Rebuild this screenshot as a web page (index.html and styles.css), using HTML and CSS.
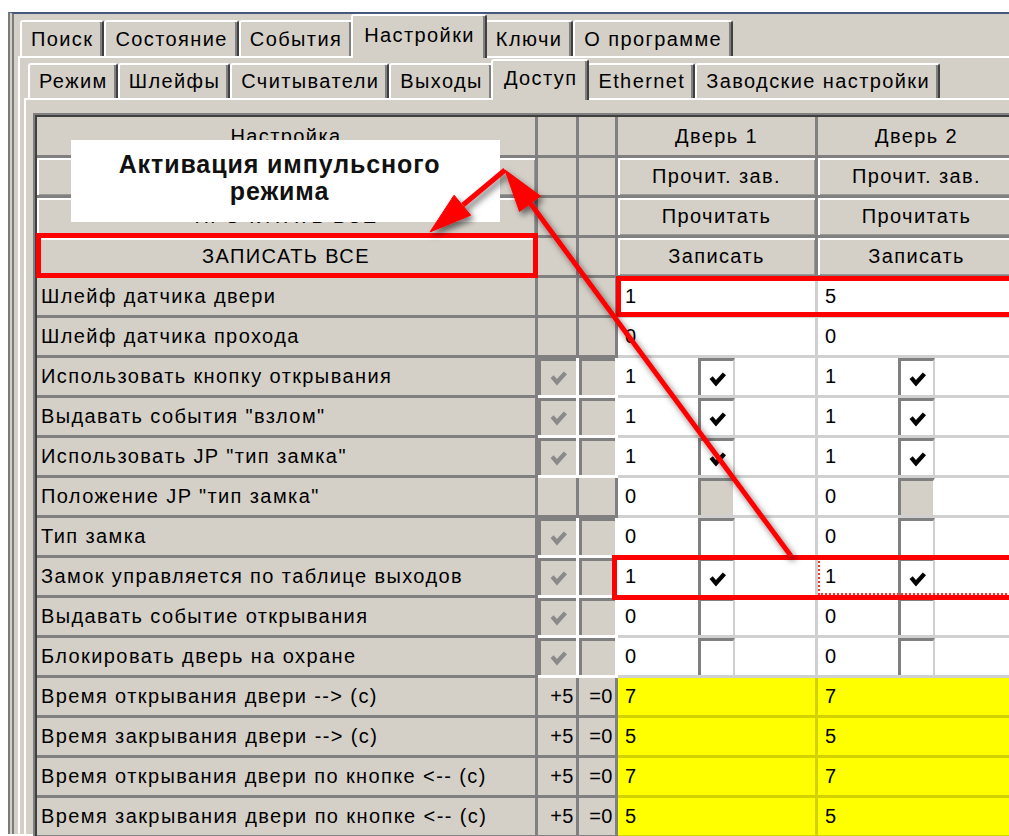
FILE: index.html
```html
<!DOCTYPE html>
<html lang="ru">
<head>
<meta charset="utf-8">
<title>Настройки — Доступ</title>
<link rel="stylesheet" href="styles.css">
</head>
<body>
<svg class="defs" aria-hidden="true">
  <symbol id="tick" viewBox="0 0 16 14">
    <path d="M0.5 6.5 L3.5 4 L6.5 7.5 L13 0.5 L16 3 L6.5 13.5 Z"/>
  </symbol>
</svg>

<div class="window">
  <div class="tabs tabs-main">
    <div class="tab">Поиск</div>
    <div class="tab">Состояние</div>
    <div class="tab">События</div>
    <div class="tab on">Настройки</div>
    <div class="tab">Ключи</div>
    <div class="tab">О программе</div>
  </div>
  <div class="page">
    <div class="tabs tabs-sub">
      <div class="tab sub">Режим</div>
      <div class="tab sub">Шлейфы</div>
      <div class="tab sub">Считыватели</div>
      <div class="tab sub">Выходы</div>
      <div class="tab sub on">Доступ</div>
      <div class="tab sub">Ethernet</div>
      <div class="tab sub">Заводские настройки</div>
    </div>
    <div class="subpage">
      <div class="grid">
        <div class="c hd">Настройка</div><div class="c"></div><div class="c"></div><div class="c hd">Дверь 1</div><div class="c hd">Дверь 2</div>

        <div class="c btn"></div><div class="c"></div><div class="c"></div><div class="c btn">Прочит. зав.</div><div class="c btn">Прочит. зав.</div>

        <div class="c btn">ПРОЧИТАТЬ ВСЕ</div><div class="c"></div><div class="c"></div><div class="c btn">Прочитать</div><div class="c btn">Прочитать</div>

        <div class="c btn">ЗАПИСАТЬ ВСЕ</div><div class="c"></div><div class="c"></div><div class="c btn">Записать</div><div class="c btn">Записать</div>

        <div class="c">Шлейф датчика двери</div><div class="c"></div><div class="c"></div><div class="c v">1</div><div class="c v">5</div>

        <div class="c">Шлейф датчика прохода</div><div class="c"></div><div class="c"></div><div class="c v">0</div><div class="c v">0</div>

        <div class="c">Использовать кнопку открывания</div>
        <div class="c chk"><svg class="tk gray"><use href="#tick"/></svg></div><div class="c chk"></div>
        <div class="c v"><span class="val">1</span><span class="box"><svg class="tk"><use href="#tick"/></svg></span></div>
        <div class="c v"><span class="val">1</span><span class="box"><svg class="tk"><use href="#tick"/></svg></span></div>

        <div class="c">Выдавать события "взлом"</div>
        <div class="c chk"><svg class="tk gray"><use href="#tick"/></svg></div><div class="c chk"></div>
        <div class="c v"><span class="val">1</span><span class="box"><svg class="tk"><use href="#tick"/></svg></span></div>
        <div class="c v"><span class="val">1</span><span class="box"><svg class="tk"><use href="#tick"/></svg></span></div>

        <div class="c">Использовать JP "тип замка"</div>
        <div class="c chk"><svg class="tk gray"><use href="#tick"/></svg></div><div class="c chk"></div>
        <div class="c v"><span class="val">1</span><span class="box"><svg class="tk"><use href="#tick"/></svg></span></div>
        <div class="c v"><span class="val">1</span><span class="box"><svg class="tk"><use href="#tick"/></svg></span></div>

        <div class="c">Положение JP "тип замка"</div><div class="c"></div><div class="c"></div>
        <div class="c v"><span class="val">0</span><span class="box off"></span></div>
        <div class="c v"><span class="val">0</span><span class="box off"></span></div>

        <div class="c">Тип замка</div>
        <div class="c chk"><svg class="tk gray"><use href="#tick"/></svg></div><div class="c chk"></div>
        <div class="c v"><span class="val">0</span><span class="box"></span></div>
        <div class="c v"><span class="val">0</span><span class="box"></span></div>

        <div class="c">Замок управляется по таблице выходов</div>
        <div class="c chk"><svg class="tk gray"><use href="#tick"/></svg></div><div class="c chk"></div>
        <div class="c v"><span class="val">1</span><span class="box"><svg class="tk"><use href="#tick"/></svg></span></div>
        <div class="c v focus"><span class="val">1</span><span class="box"><svg class="tk"><use href="#tick"/></svg></span></div>

        <div class="c">Выдавать событие открывания</div>
        <div class="c chk"><svg class="tk gray"><use href="#tick"/></svg></div><div class="c chk"></div>
        <div class="c v"><span class="val">0</span><span class="box"></span></div>
        <div class="c v"><span class="val">0</span><span class="box"></span></div>

        <div class="c">Блокировать дверь на охране</div>
        <div class="c chk"><svg class="tk gray"><use href="#tick"/></svg></div><div class="c chk"></div>
        <div class="c v"><span class="val">0</span><span class="box"></span></div>
        <div class="c v"><span class="val">0</span><span class="box"></span></div>

        <div class="c">Время открывания двери --&gt; (с)</div><div class="c num">+5</div><div class="c num">=0</div><div class="c v y">7</div><div class="c v y">7</div>

        <div class="c">Время закрывания двери --&gt; (с)</div><div class="c num">+5</div><div class="c num">=0</div><div class="c v y">5</div><div class="c v y">5</div>

        <div class="c">Время открывания двери по кнопке &lt;-- (с)</div><div class="c num">+5</div><div class="c num">=0</div><div class="c v y">7</div><div class="c v y">7</div>

        <div class="c">Время закрывания двери по кнопке &lt;-- (с)</div><div class="c num">+5</div><div class="c num">=0</div><div class="c v y">5</div><div class="c v y">5</div>
      </div>
    </div>
  </div>
</div>

<div class="callout">Активация импульсного<br>режима</div>

<svg class="marks" width="1009" height="836" viewBox="0 0 1009 836" aria-hidden="true">
  <defs>
    <filter id="shade" x="-30%" y="-30%" width="160%" height="160%">
      <feDropShadow dx="3" dy="4" stdDeviation="3" flood-color="#000" flood-opacity="0.55"/>
    </filter>
  </defs>
  <g fill="none" stroke="#ff0000" stroke-width="5">
    <rect x="38.5" y="235.5" width="497" height="40"/>
    <rect x="618.5" y="278.5" width="440" height="36"/>
    <rect x="614.5" y="557.5" width="440" height="40"/>
  </g>
  <g filter="url(#shade)" fill="#ff0000" stroke="#ff0000">
    <line x1="791" y1="556" x2="525" y2="196" stroke-width="5"/>
    <polygon points="505,170 540.5,196.1 519.5,211.5" stroke-width="1"/>
    <line x1="505" y1="170" x2="463" y2="205" stroke-width="5"/>
    <polygon points="430,232 470.7,215.2 454.1,195.2" stroke-width="1"/>
  </g>
</svg>
</body>
</html>
```

FILE: styles.css
```css
html, body {
  margin: 0;
  padding: 0;
  overflow: hidden;
  background: #fff;
}

body {
  position: relative;
  width: 1009px;
  height: 836px;
  font-family: "Liberation Sans", Arial, sans-serif;
  font-size: 20px;
  letter-spacing: 1.4px;
  color: #000;
}

.defs {
  position: absolute;
  width: 0;
  height: 0;
}

/* application frame */
.window {
  margin: 12px 0 0 8px;
  width: 1100px;
  height: 822px;
  box-sizing: border-box;
  border-top: 2px solid #46577d;
  border-left: 6px double #7b7b7b;
  padding-left: 4px;
  background: #d4d0c8;
}

/* tab strips */
.tabs {
  display: flex;
  align-items: flex-end;
}

.tabs-main {
  height: 42px;
  padding-left: 2px;
}

.tabs-sub {
  height: 40px;
  padding-left: 4px;
}

.tab {
  box-sizing: border-box;
  height: 36px;
  padding: 0 8px 0 9px;
  display: flex;
  align-items: center;
  white-space: nowrap;
  background: #d4d0c8;
  border-top: 2px solid #fff;
  border-left: 2px solid #fff;
  border-right: 2px solid #404040;
  border-radius: 3px 3px 0 0;
  box-shadow: inset -2px 0 0 #808080;
}

.tabs-main .tab {
  padding: 0 9px;
}

.tab.sub {
  height: 35px;
}

.tabs-main .tab.on,
.tab.on {
  position: relative;
  z-index: 1;
  height: 44px;
  margin: 0 -2px -2px;
  padding: 0 10px 4px 11px;
}

.tab.sub.on {
  height: 41px;
}

/* tab pages */
.page {
  border-top: 2px solid #fff;
  border-left: 2px solid #fff;
  padding-left: 4px;
  height: 800px;
}

.subpage {
  border-top: 2px solid #fff;
  border-left: 2px solid #fff;
  padding: 13px 0 0 7px;
  height: 760px;
}

/* settings grid */
.grid {
  display: grid;
  grid-template-columns: 501px 41px 39px 200px 200px;
  grid-template-rows: 41px;
  grid-auto-rows: 40px;
  width: max-content;
  border-top: 2px solid #808080;
  border-left: 2px solid #808080;
  padding: 2px 0 0 2px;
  background: #404040;
}

.c {
  box-sizing: border-box;
  display: flex;
  align-items: center;
  padding: 0 4px;
  white-space: nowrap;
  overflow: hidden;
  background: #d4d0c8;
  border-right: 3px solid #808080;
  border-bottom: 3px solid #808080;
}

.hd {
  justify-content: center;
}

.btn {
  justify-content: center;
  box-shadow: inset 2px 2px 0 #fff, inset -1px -1px 0 #9a9a9a;
}

.num {
  justify-content: flex-end;
  padding-right: 2px;
  letter-spacing: 0.5px;
}

.chk {
  justify-content: center;
  border-right-color: #fff;
  border-bottom-color: #fff;
  box-shadow: inset 3px 3px 0 #808080;
}

.v {
  position: relative;
  align-items: center;
  padding-left: 7px;
  background: #fff;
  border-right-color: #d0d0d0;
  border-bottom-color: #d0d0d0;
}

.y {
  background: #ffff00;
  border-right-color: #d2d200;
  border-bottom-color: #d2d200;
}

.val {
  width: 73px;
  flex: none;
}

.box {
  box-sizing: border-box;
  align-self: stretch;
  width: 37px;
  flex: none;
  display: flex;
  align-items: center;
  justify-content: center;
  padding: 3px 0 0 1px;
  background: #fff;
  border-top: 3px solid #808080;
  border-left: 3px solid #808080;
  border-right: 2px solid #d0d0d0;
}

.box.off {
  background: #d4d0c8;
  border-right-color: #fff;
}

.tk {
  width: 17px;
  height: 15px;
  fill: #000;
}

.tk.gray {
  fill: #8a8a8a;
  margin: 3px 0 0 3px;
}

.focus::after {
  content: "";
  position: absolute;
  left: 0;
  right: 0;
  top: 0;
  bottom: 0;
  border-left: 2px dotted #ff3030;
  border-bottom: 2px dotted #ff3030;
}

/* annotation layer */
.callout {
  position: absolute;
  left: 71px;
  top: 140px;
  width: 429px;
  height: 82px;
  box-sizing: border-box;
  padding: 11px 12px 0 0;
  background: #fff;
  text-align: center;
  font-weight: bold;
  font-size: 25px;
  line-height: 27px;
  letter-spacing: 0.9px;
  color: #111;
}

.marks {
  position: absolute;
  left: 0;
  top: 0;
  pointer-events: none;
}
```
